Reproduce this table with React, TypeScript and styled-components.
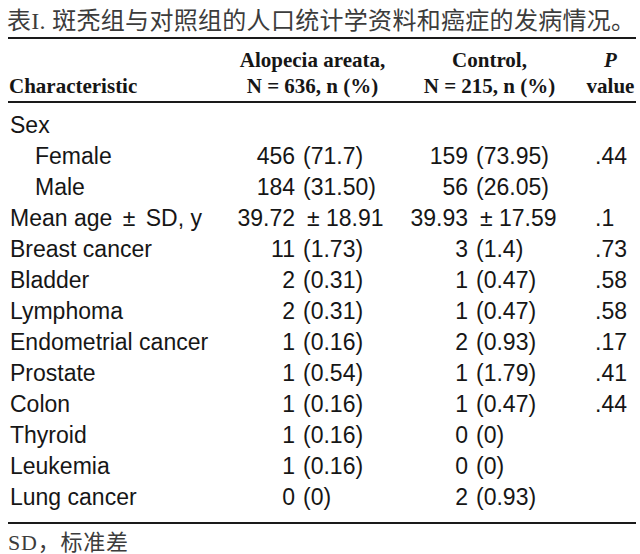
import React from 'react';
import styled, { createGlobalStyle } from 'styled-components';

const GlobalStyle = createGlobalStyle`
  html, body {
    margin: 0;
    padding: 0;
    background: #fff;
  }
`;

const Page = styled.div`
  width: 640px;
  height: 554px;
  box-sizing: border-box;
  padding: 5px 4px 0 8px;
  overflow: hidden;
  color: #161616;
`;

const Title = styled.div`
  font-family: "Liberation Serif", "Noto Sans CJK SC", serif;
  font-size: 24px;
  letter-spacing: 0.3px;
  line-height: 32px;
  color: #3c3c3c;
  white-space: nowrap;
  margin-left: -1px;
`;

const Rule = styled.div`
  height: 2px;
  background: #1a1a1a;
`;

const Grid = styled.div`
  display: grid;
  grid-template-columns: 217px 70px 105px 68px 117px 51px;
`;

const Head = styled(Grid)`
  padding: 8px 0 2px;
  font-family: "Liberation Serif", "Times New Roman", serif;
  font-weight: bold;
  font-size: 21px;
  line-height: 26px;
`;

const HeadCell = styled.div<{ $span?: number; $left?: boolean; $shift?: number }>`
  grid-column: span ${p => p.$span ?? 1};
  display: flex;
  flex-direction: column;
  justify-content: flex-end;
  align-items: ${p => (p.$left ? 'flex-start' : 'center')};
  padding-left: ${p => (p.$left ? '1px' : '0')};
  padding-right: ${p => p.$shift ?? 0}px;
  white-space: nowrap;
`;

const Body = styled(Grid)`
  padding: 7px 0 9px;
  font-family: "Liberation Sans", Arial, sans-serif;
  font-size: 23px;
  line-height: 31px;
  grid-auto-rows: 31px;
`;

const Label = styled.div<{ $indent?: boolean }>`
  padding-left: ${p => (p.$indent ? '27px' : '2px')};
  white-space: nowrap;
`;

const Count = styled.div`
  text-align: right;
  white-space: nowrap;
`;

const Pct = styled.div`
  padding-left: 8px;
  white-space: nowrap;
`;

const PVal = styled.div`
  padding-left: 10px;
  white-space: nowrap;
`;

// the ± in the label has extra air on both sides
const PlusMinus = styled.span`
  margin: 0 4px;
`;

// the ± in a value cell sits a little right of the count
const Sign = styled.span`
  margin-left: 4px;
`;

const Footnote = styled.div`
  font-family: "Liberation Serif", "Noto Sans CJK SC", serif;
  font-size: 22px;
  letter-spacing: 0.8px;
  line-height: 30px;
  color: #3c3c3c;
  padding-top: 4px;
`;

type Row = {
  label: React.ReactNode;
  key: string;
  indent?: boolean;
  a?: [React.ReactNode, React.ReactNode];
  b?: [React.ReactNode, React.ReactNode];
  p?: string;
};

const rows: Row[] = [
  { key: 'sex', label: 'Sex' },
  { key: 'f', label: 'Female', indent: true, a: ['456', '(71.7)'], b: ['159', '(73.95)'], p: '.44' },
  { key: 'm', label: 'Male', indent: true, a: ['184', '(31.50)'], b: ['56', '(26.05)'] },
  {
    key: 'age',
    label: <>Mean age<PlusMinus> ± </PlusMinus>SD, y</>,
    a: ['39.72', <><Sign>±</Sign> 18.91</>],
    b: ['39.93', <><Sign>±</Sign> 17.59</>],
    p: '.1',
  },
  { key: 'breast', label: 'Breast cancer', a: ['11', '(1.73)'], b: ['3', '(1.4)'], p: '.73' },
  { key: 'bladder', label: 'Bladder', a: ['2', '(0.31)'], b: ['1', '(0.47)'], p: '.58' },
  { key: 'lymph', label: 'Lymphoma', a: ['2', '(0.31)'], b: ['1', '(0.47)'], p: '.58' },
  { key: 'endo', label: 'Endometrial cancer', a: ['1', '(0.16)'], b: ['2', '(0.93)'], p: '.17' },
  { key: 'prostate', label: 'Prostate', a: ['1', '(0.54)'], b: ['1', '(1.79)'], p: '.41' },
  { key: 'colon', label: 'Colon', a: ['1', '(0.16)'], b: ['1', '(0.47)'], p: '.44' },
  { key: 'thyroid', label: 'Thyroid', a: ['1', '(0.16)'], b: ['0', '(0)'] },
  { key: 'leuk', label: 'Leukemia', a: ['1', '(0.16)'], b: ['0', '(0)'] },
  { key: 'lung', label: 'Lung cancer', a: ['0', '(0)'], b: ['2', '(0.93)'] },
];

const App: React.FC = () => {
  return (
    <Page>
      <GlobalStyle />
      <Title>表I. 斑秃组与对照组的人口统计学资料和癌症的发病情况。</Title>
      <Rule />
      <Head>
        <HeadCell $left>Characteristic</HeadCell>
        <HeadCell $span={2}>
          <span>Alopecia areata,</span>
          <span>N = 636, n (%)</span>
        </HeadCell>
        <HeadCell $span={2} $shift={6}>
          <span>Control,</span>
          <span>N = 215, n (%)</span>
        </HeadCell>
        <HeadCell>
          <i>P</i>
          <span>value</span>
        </HeadCell>
      </Head>
      <Rule />
      <Body>
        {rows.map(r => (
          <React.Fragment key={r.key}>
            <Label $indent={r.indent}>{r.label}</Label>
            <Count>{r.a?.[0]}</Count>
            <Pct>{r.a?.[1]}</Pct>
            <Count>{r.b?.[0]}</Count>
            <Pct>{r.b?.[1]}</Pct>
            <PVal>{r.p}</PVal>
          </React.Fragment>
        ))}
      </Body>
      <Rule />
      <Footnote>SD，标准差</Footnote>
    </Page>
  );
};

export default App;
